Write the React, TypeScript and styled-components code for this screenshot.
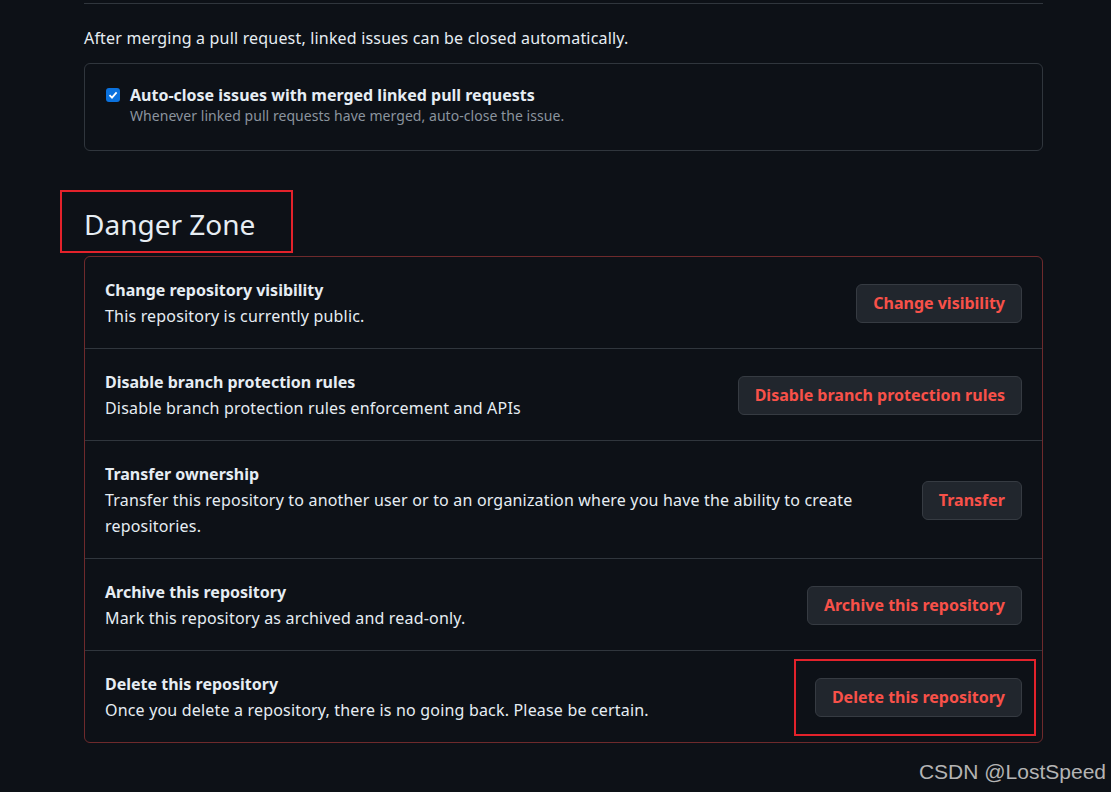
import styled, { createGlobalStyle } from "styled-components";

const GlobalStyle = createGlobalStyle`
  html, body {
    margin: 0;
    padding: 0;
    background: #0d1117;
  }
  body {
    font-family: "Segoe UI", "Noto Sans", sans-serif;
    color: #e6edf3;
  }
`;

const rows = [
  {
    title: "Change repository visibility",
    desc: "This repository is currently public.",
    action: "Change visibility",
  },
  {
    title: "Disable branch protection rules",
    desc: "Disable branch protection rules enforcement and APIs",
    action: "Disable branch protection rules",
  },
  {
    title: "Transfer ownership",
    desc: "Transfer this repository to another user or to an organization where you have the ability to create repositories.",
    action: "Transfer",
  },
  {
    title: "Archive this repository",
    desc: "Mark this repository as archived and read-only.",
    action: "Archive this repository",
  },
  {
    title: "Delete this repository",
    desc: "Once you delete a repository, there is no going back. Please be certain.",
    action: "Delete this repository",
    marked: true,
  },
];

export default function App() {
  return (
    <>
      <GlobalStyle />
      <Page>
        <Content>
          <TopRule />
          <Intro>After merging a pull request, linked issues can be closed automatically.</Intro>
          <OptionBox>
            <CheckRow>
              <Check>
                <svg width="10" height="10" viewBox="0 0 10 10">
                  <path d="M1.5 5.2 L4 7.6 L8.6 2.4" stroke="#fff" strokeWidth="1.8" fill="none" />
                </svg>
              </Check>
              <div>
                <CheckLabel>Auto-close issues with merged linked pull requests</CheckLabel>
                <CheckNote>Whenever linked pull requests have merged, auto-close the issue.</CheckNote>
              </div>
            </CheckRow>
          </OptionBox>

          <Heading>
            Danger Zone
            <Marker $inset="-17px -38px -12px -24px" />
          </Heading>

          <DangerBox>
            {rows.map((r) => (
              <Row key={r.title}>
                <RowText>
                  <RowTitle>{r.title}</RowTitle>
                  <RowDesc>{r.desc}</RowDesc>
                </RowText>
                <ButtonWrap>
                  <DangerButton>{r.action}</DangerButton>
                  {r.marked && <Marker $inset="-19px -14px -19px -21px" />}
                </ButtonWrap>
              </Row>
            ))}
          </DangerBox>
        </Content>
        <Watermark>CSDN @LostSpeed</Watermark>
      </Page>
    </>
  );
}

const Page = styled.div`
  position: relative;
  width: 1111px;
  height: 792px;
  overflow: hidden;
  background: #0d1117;
`;

const Content = styled.div`
  width: 959px;
  margin-left: 84px;
  padding-top: 3px;
`;

const TopRule = styled.div`
  height: 1px;
  background: #30363d;
`;

const Intro = styled.p`
  margin: 22px 0 13px;
  font-size: 16px;
  line-height: 24px;
  letter-spacing: 0.18px;
`;

const OptionBox = styled.div`
  border: 1px solid #30363d;
  border-radius: 6px;
  padding: 20px 21px 20px;
  height: 88px;
  box-sizing: border-box;
`;

const CheckRow = styled.div`
  display: flex;
  align-items: flex-start;
  gap: 10px;
`;

const Check = styled.span`
  display: flex;
  align-items: center;
  justify-content: center;
  width: 14px;
  height: 14px;
  margin-top: 4px;
  border-radius: 3px;
  background: #0b72de;
  flex-shrink: 0;
`;

const CheckLabel = styled.div`
  font-size: 16px;
  font-weight: 700;
  line-height: 22px;
`;

const CheckNote = styled.div`
  font-size: 14px;
  line-height: 20px;
  letter-spacing: 0.05px;
  color: #8b949e;
`;

const Heading = styled.h2`
  position: relative;
  display: inline-block;
  margin: 56px 0 15px;
  font-size: 28px;
  font-weight: 400;
  line-height: 34px;
`;

const Marker = styled.span<{ $inset: string }>`
  position: absolute;
  inset: ${(p) => p.$inset};
  border: 2px solid #e3222b;
  pointer-events: none;
`;

const DangerBox = styled.div`
  border: 1px solid #6e2a2c;
  border-radius: 6px;
`;

const Row = styled.div`
  display: flex;
  align-items: center;
  gap: 16px;
  padding: 20px 20px 19px;
  & + & {
    border-top: 1px solid #30363d;
  }
`;

const RowText = styled.div`
  flex: 1;
  max-width: 800px;
  margin-right: auto;
`;

const RowTitle = styled.div`
  font-size: 16px;
  font-weight: 700;
  line-height: 26px;
`;

const RowDesc = styled.div`
  font-size: 16px;
  line-height: 26px;
  letter-spacing: 0.18px;
`;

const ButtonWrap = styled.div`
  position: relative;
  flex-shrink: 0;
`;

const DangerButton = styled.button`
  height: 39px;
  padding: 0 16px;
  border: 1px solid #363b42;
  border-radius: 6px;
  background: #21262d;
  color: #f85149;
  font-family: inherit;
  font-size: 16px;
  font-weight: 700;
  cursor: pointer;
`;

const Watermark = styled.div`
  position: absolute;
  right: 5px;
  bottom: 8px;
  font-family: "Liberation Sans", Arial, sans-serif;
  font-size: 21px;
  color: #b4b4b4;
`;
